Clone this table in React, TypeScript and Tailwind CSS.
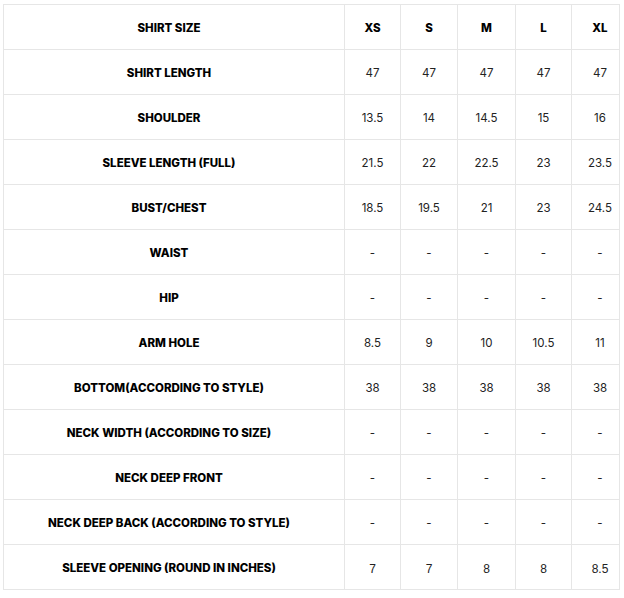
const sizes = ["XS", "S", "M", "L", "XL"];

const rows: { label: string; values: string[]; plain?: boolean }[] = [
  { label: "SHIRT LENGTH", values: ["47", "47", "47", "47", "47"] },
  { label: "SHOULDER", values: ["13.5", "14", "14.5", "15", "16"] },
  { label: "SLEEVE LENGTH (FULL)", values: ["21.5", "22", "22.5", "23", "23.5"] },
  { label: "BUST/CHEST", values: ["18.5", "19.5", "21", "23", "24.5"] },
  { label: "WAIST", values: ["-", "-", "-", "-", "-"] },
  { label: "HIP", values: ["-", "-", "-", "-", "-"] },
  { label: "ARM HOLE", values: ["8.5", "9", "10", "10.5", "11"] },
  { label: "BOTTOM(ACCORDING TO STYLE)", values: ["38", "38", "38", "38", "38"] },
  { label: "NECK WIDTH (ACCORDING TO SIZE)", values: ["-", "-", "-", "-", "-"] },
  { label: "NECK DEEP FRONT", values: ["-", "-", "-", "-", "-"] },
  { label: "NECK DEEP BACK (ACCORDING TO STYLE)", values: ["-", "-", "-", "-", "-"] },
  { label: "SLEEVE OPENING (ROUND IN INCHES)", values: ["7", "7", "8", "8", "8.5"], plain: true },
];

// last column is clipped in the original, so its content sits right of centre
const cellPad = (i: number) => (i === 4 ? "pl-[9px]" : "");

export default function App() {
  return (
    <div className="bg-white min-h-screen pl-[3px] pt-[4px] font-['Inter',sans-serif]">
      <table className="table-fixed border-collapse w-[616px]">
        <colgroup>
          <col className="w-[341px]" />
          <col className="w-[56px]" />
          <col className="w-[57px]" />
          <col className="w-[58px]" />
          <col className="w-[56px]" />
          <col className="w-[48px]" />
        </colgroup>
        <thead>
          <tr className="h-[45px]">
            <th className="border border-[#e6e6e6] pr-[10px] pt-[4px] text-[11.5px] font-extrabold text-black">
              SHIRT SIZE
            </th>
            {sizes.map((s, i) => (
              <th
                key={s}
                className={`border border-[#e6e6e6] pt-[4px] text-[11.5px] font-extrabold text-black ${cellPad(i)}`}
              >
                {s}
              </th>
            ))}
          </tr>
        </thead>
        <tbody>
          {rows.map((r) => (
            <tr key={r.label} className="h-[45px]">
              <td className="border border-[#e6e6e6] pr-[10px] pt-[4px] text-center text-[11.5px] font-extrabold text-black">
                {r.label}
              </td>
              {r.values.map((v, i) => (
                <td
                  key={i}
                  className={
                    r.plain
                      ? `border border-[#e6e6e6] pt-[4px] text-center text-[12px] text-[#222] font-['Liberation_Sans',sans-serif] ${cellPad(i)}`
                      : `border border-[#e6e6e6] pt-[4px] text-center text-[11.5px] text-[#222] ${cellPad(i)}`
                  }
                >
                  {v}
                </td>
              ))}
            </tr>
          ))}
        </tbody>
      </table>
    </div>
  );
}
